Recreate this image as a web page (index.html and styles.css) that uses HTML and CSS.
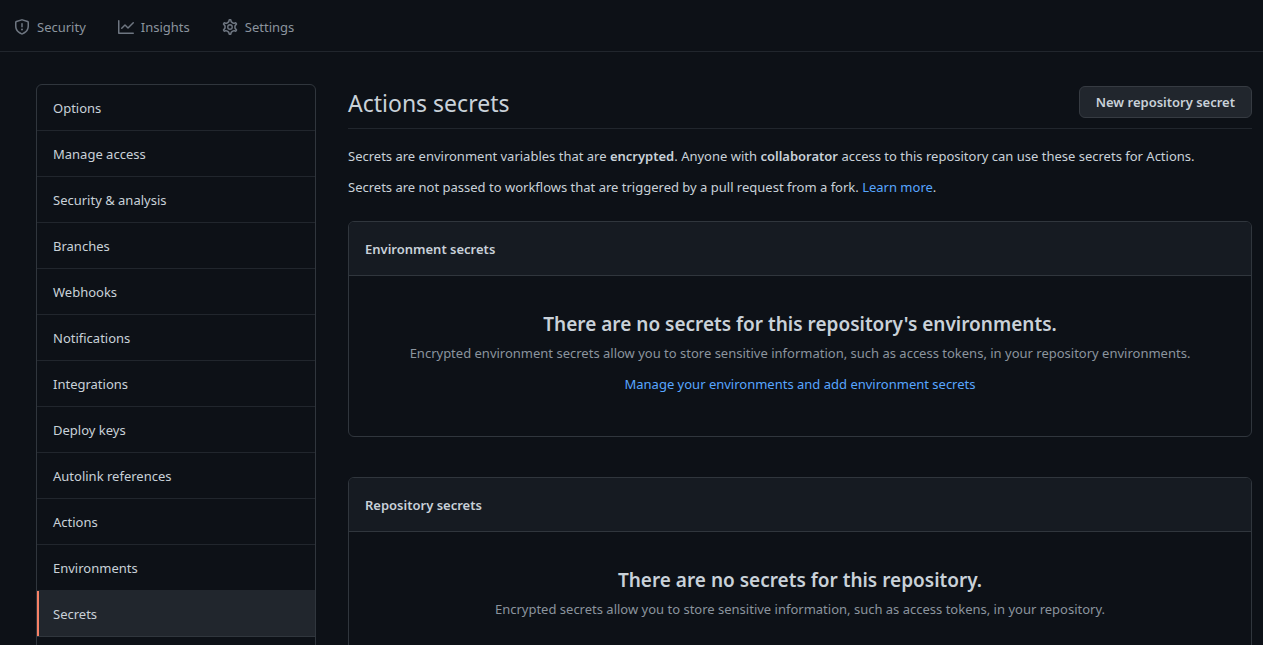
FILE: index.html
```html
<!DOCTYPE html>
<html lang="en">
<head>
<meta charset="utf-8">
<title>Actions secrets</title>
<link rel="stylesheet" href="styles.css">
</head>
<body>
<header class="topbar">
  <nav class="tabs" aria-label="Repository">
    <a class="tab" href="#security">
      <svg class="icon" viewBox="0 0 16 16" aria-hidden="true"><path fill-rule="evenodd" d="M7.467.133a1.75 1.75 0 011.066 0l5.25 1.68A1.75 1.75 0 0115 3.48V7c0 1.566-.32 3.182-1.303 4.682-.983 1.498-2.585 2.813-5.032 3.855a1.7 1.7 0 01-1.33 0c-2.447-1.042-4.049-2.357-5.032-3.855C1.32 10.182 1 8.566 1 7V3.48a1.75 1.75 0 011.217-1.667l5.25-1.68zm.61 1.429a.25.25 0 00-.153 0l-5.25 1.68a.25.25 0 00-.174.238V7c0 1.358.275 2.666 1.057 3.86.784 1.194 2.121 2.34 4.366 3.297a.2.2 0 00.154 0c2.245-.956 3.582-2.104 4.366-3.298C13.225 9.666 13.5 8.36 13.5 7V3.48a.25.25 0 00-.174-.237l-5.25-1.68zM9 10.5a1 1 0 11-2 0 1 1 0 012 0zm-.25-5.75a.75.75 0 10-1.5 0v3a.75.75 0 001.5 0v-3z"/></svg>
      <span>Security</span>
    </a>
    <a class="tab" href="#insights">
      <svg class="icon" viewBox="0 0 16 16" aria-hidden="true"><path fill-rule="evenodd" d="M1.5 1.75a.75.75 0 00-1.5 0v12.5c0 .414.336.75.75.75h14.5a.75.75 0 000-1.5H1.5V1.75zm14.28 2.53a.75.75 0 00-1.06-1.06L10 7.94 7.53 5.47a.75.75 0 00-1.06 0L3.22 8.72a.75.75 0 001.06 1.06L7 7.06l2.47 2.47a.75.75 0 001.06 0l5.25-5.25z"/></svg>
      <span>Insights</span>
    </a>
    <a class="tab" href="#settings">
      <svg class="icon icon-line" viewBox="0 0 16 16" aria-hidden="true"><path transform="translate(-.8 -.8) scale(1.1)" d="M7.429 1.525a6.593 6.593 0 011.142 0c.036.003.108.036.137.146l.289 1.105c.147.56.55.967.997 1.189.174.086.341.183.501.29.417.278.97.423 1.53.27l1.102-.303c.11-.03.175.016.195.046.219.31.41.641.573.989.014.031.022.11-.059.19l-.815.806c-.411.406-.562.957-.53 1.456a4.588 4.588 0 010 .582c-.032.499.119 1.05.53 1.456l.815.806c.08.08.073.159.059.19a6.494 6.494 0 01-.573.99c-.02.029-.086.074-.195.045l-1.103-.303c-.559-.153-1.112-.008-1.529.27-.16.107-.327.204-.5.29-.449.222-.851.628-.998 1.189l-.289 1.105c-.029.11-.101.143-.137.146a6.613 6.613 0 01-1.142 0c-.036-.003-.108-.037-.137-.146l-.289-1.105c-.147-.56-.55-.967-.997-1.189a4.502 4.502 0 01-.501-.29c-.417-.278-.97-.423-1.53-.27l-1.102.303c-.11.03-.175-.016-.195-.046a6.492 6.492 0 01-.573-.989c-.014-.031-.022-.11.059-.19l.815-.806c.411-.406.562-.957.53-1.456a4.587 4.587 0 010-.582c.032-.499-.119-1.05-.53-1.456l-.815-.806c-.08-.08-.073-.159-.059-.19a6.44 6.44 0 01.573-.99c.02-.029.086-.075.195-.045l1.103.303c.559.153 1.112.008 1.529-.27.16-.107.327-.204.5-.29.449-.222.851-.628.998-1.189l.289-1.105c.029-.11.101-.143.137-.146z"/><circle cx="8" cy="8" r="2.25"/></svg>
      <span>Settings</span>
    </a>
  </nav>
</header>
<div class="layout">
  <nav class="menu" aria-label="Settings">
    <a class="menu-item" href="#options">Options</a>
    <a class="menu-item" href="#access">Manage access</a>
    <a class="menu-item" href="#analysis">Security &amp; analysis</a>
    <a class="menu-item" href="#branches">Branches</a>
    <a class="menu-item" href="#webhooks">Webhooks</a>
    <a class="menu-item" href="#notifications">Notifications</a>
    <a class="menu-item" href="#integrations">Integrations</a>
    <a class="menu-item" href="#keys">Deploy keys</a>
    <a class="menu-item" href="#autolinks">Autolink references</a>
    <a class="menu-item" href="#actions">Actions</a>
    <a class="menu-item" href="#environments">Environments</a>
    <a class="menu-item menu-item-current" href="#secrets" aria-current="page">Secrets</a>
  </nav>
  <main class="content">
    <div class="page-head">
      <h1 class="page-title">Actions secrets</h1>
      <button class="button" type="button">New repository secret</button>
    </div>
    <p class="intro">Secrets are environment variables that are <strong>encrypted</strong>. Anyone with <strong>collaborator</strong> access to this repository can use these secrets for Actions.</p>
    <p class="intro">Secrets are not passed to workflows that are triggered by a pull request from a fork. <a class="link" href="#learn">Learn more</a>.</p>
    <section class="box">
      <h2 class="box-head">Environment secrets</h2>
      <div class="blank">
        <h3 class="blank-title">There are no secrets for this repository's environments.</h3>
        <p class="blank-text">Encrypted environment secrets allow you to store sensitive information, such as access tokens, in your repository environments.</p>
        <p class="blank-action"><a class="link" href="#manage">Manage your environments and add environment secrets</a></p>
      </div>
    </section>
    <section class="box">
      <h2 class="box-head">Repository secrets</h2>
      <div class="blank">
        <h3 class="blank-title">There are no secrets for this repository.</h3>
        <p class="blank-text">Encrypted secrets allow you to store sensitive information, such as access tokens, in your repository.</p>
      </div>
    </section>
  </main>
</div>
</body>
</html>
```
FILE: styles.css
```css
* { box-sizing: border-box; }
html { height: 100%; overflow: hidden; background: #0d1117; }
body {
  height: 100%;
  margin: 0;
  overflow: hidden;
  color: #c9d1d9;
  font-family: "Noto Sans", "Open Sans", sans-serif;
  font-size: 13px;
  line-height: 21px;
}
h1, h2, h3, p { margin: 0; }
strong { font-weight: 600; }
.topbar { padding: 17px 14px 13px; border-bottom: 1px solid #21262d; }
.tabs { display: flex; gap: 32px; }
.tab { display: flex; align-items: flex-start; gap: 7px; color: #8b949e; text-decoration: none; }
.icon { width: 16px; height: 16px; margin-top: 2px; fill: #6e7681; }
.icon-line { fill: none; stroke: #6e7681; stroke-width: 1.4; }
.layout { display: flex; align-items: flex-start; gap: 32px; padding: 32px 11px 0 36px; }
.menu { flex: 0 0 280px; border: 1px solid #30363d; border-radius: 6px; padding-bottom: 46px; }
.menu-item {
  display: block;
  padding: 13px 16px 11px;
  border-bottom: 1px solid #21262d;
  color: inherit;
  text-decoration: none;
}
.menu-item-current { background: #21262d; border-color: #30363d; box-shadow: inset 2px 0 #f78166; }
.content { flex: 1; min-width: 0; }
.page-head {
  display: flex;
  align-items: center;
  justify-content: space-between;
  margin-bottom: 17px;
  padding: 2px 0 10px;
  border-bottom: 1px solid #21262d;
}
.page-title { padding-top: 2px; font-size: 23px; font-weight: 400; line-height: 30px; }
.button {
  padding: 5px 16px;
  border: 1px solid #363b42;
  border-radius: 6px;
  background: #21262d;
  color: inherit;
  font: inherit;
  font-weight: 600;
  line-height: 20px;
}
.intro { margin-bottom: 10px; }
.link { color: #58a6ff; text-decoration: none; }
.box { margin: 23px 0 40px; border: 1px solid #30363d; border-radius: 6px; overflow: hidden; }
.box-head {
  padding: 17px 16px 15px;
  border-bottom: 1px solid #30363d;
  background: #161b22;
  font-size: 13px;
  font-weight: 600;
  line-height: 21px;
}
.blank { padding: 33px 32px 31px; text-align: center; }
.blank-title { margin-bottom: 4px; font-size: 19px; font-weight: 600; line-height: 30px; }
.blank-text { color: #8b949e; }
.blank-action { padding: 10px 0; }
```
